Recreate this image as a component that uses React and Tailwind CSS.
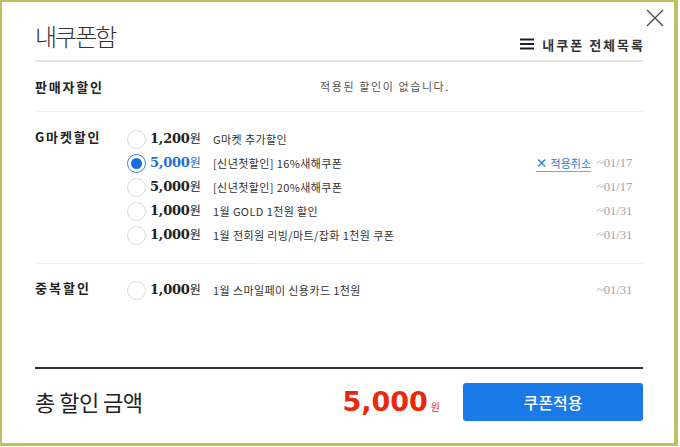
import React from "react";

const KR = { fontFamily: '"Noto Sans CJK KR", "Noto Sans", sans-serif' };

const coupons = [
  { amount: "1,200", name: "G마켓 추가할인", date: "" },
  { amount: "5,000", name: "[신년첫할인] 16%새해쿠폰", date: "~01/17", selected: true },
  { amount: "5,000", name: "[신년첫할인] 20%새해쿠폰", date: "~01/17" },
  { amount: "1,000", name: "1월 GOLD 1천원 할인", date: "~01/31" },
  { amount: "1,000", name: "1월 전회원 리빙/마트/잡화 1천원 쿠폰", date: "~01/31" },
];

const Radio = ({ checked }) => (
  <span
    className={
      "w-[19px] h-[19px] rounded-full flex items-center justify-center flex-shrink-0 bg-white " +
      (checked ? "border border-[#3b82e0]" : "border border-[#dadada]")
    }
  >
    {checked && <span className="w-[11px] h-[11px] rounded-full bg-[#1a6fe0]" />}
  </span>
);

const CouponRow = ({ amount, name, date, selected }) => (
  <div className="h-6 flex items-center">
    <Radio checked={selected} />
    <span
      className={
        "ml-[4px] w-[63px] font-bold text-[13px] tracking-[-0.2px] " +
        (selected ? "text-[#1f6fd3]" : "text-[#222]")
      }
      style={{ fontFamily: '"DejaVu Serif", serif' }}
    >
      {amount}
      <span className="text-[12px] font-normal" style={KR}>원</span>
    </span>
    <span className="text-[11px] text-[#333] flex-1 tracking-[0.4px]" style={KR}>{name}</span>
    {selected && (
      <span
        className="text-[11px] text-[#2d7ad6] border-b border-[#6aa3e6] leading-[16px] mr-[6px] flex items-center gap-[3px]"
        style={KR}
      >
        <span className="font-bold text-[12px]">×</span>적용취소
      </span>
    )}
    <span
      className="w-[36px] text-[12.5px] text-[#a3a3a3] mr-[10px]"
      style={{ fontFamily: '"Liberation Serif", serif' }}
    >
      {date}
    </span>
  </div>
);

export default function App() {
  return (
    <div className="w-[680px] h-[447px] bg-white">
      <div
        className="relative w-[678px] h-[446px] border-l-2 border-t-2 border-r-[4px] border-b-[3px] border-[#bfbf63] bg-white pl-[33px] pr-[31px] flex flex-col"
        style={KR}
      >
        <button className="absolute right-[9px] top-[6px] w-[20px] h-[20px]">
          <svg viewBox="0 0 20 20" className="w-[20px] h-[20px]">
            <path d="M2 2 L18 18 M18 2 L2 18" stroke="#444" strokeWidth="1.2" fill="none" />
          </svg>
        </button>

        <div className="h-[60px] flex items-end justify-between border-b-2 border-[#e2e2e2] pb-[6px]">
          <h1 className="text-[24px] font-light text-[#333] leading-none mb-[6px] tracking-[-2px]">
            내쿠폰함
          </h1>
          <div className="flex items-center gap-[8px] text-[13px] font-bold text-[#333]">
            <svg viewBox="0 0 14 12" className="w-[14px] h-[12px]">
              <path d="M0 1.5 H14 M0 6 H14 M0 10.5 H14" stroke="#222" strokeWidth="2" />
            </svg>
            <span className="tracking-[2px] mr-[-2px]">내쿠폰 전체목록</span>
          </div>
        </div>

        <div className="h-[50px] flex items-center border-b border-[#eeeeee]">
          <span className="w-[92px] text-[13px] font-bold text-[#222] tracking-[1.8px]">판매자할인</span>
          <span className="flex-1 text-center text-[11px] text-[#555] tracking-[1.6px]">
            적용된 할인이 없습니다.
          </span>
        </div>

        <div className="flex pt-[15px] pb-[16px] border-b border-[#eeeeee]">
          <span className="w-[92px] text-[13px] font-bold text-[#222] leading-[20px] tracking-[1.8px]">
            G마켓할인
          </span>
          <div className="flex-1 flex flex-col">
            {coupons.map((c, i) => (
              <CouponRow key={i} {...c} />
            ))}
          </div>
        </div>

        <div className="flex pt-[14px] h-[105px] border-b-2 border-[#333]">
          <span className="w-[92px] text-[13px] font-bold text-[#222] leading-[20px] tracking-[2px]">
            중복할인
          </span>
          <div className="flex-1 flex flex-col">
            <CouponRow amount="1,000" name="1월 스마일페이 신용카드 1천원" date="~01/31" />
          </div>
        </div>

        <div className="flex-1 flex items-center justify-between pb-[9px]">
          <span className="text-[22px] text-[#222] tracking-[-0.5px]">총 할인 금액</span>
          <div className="flex items-center">
            <span className="flex items-baseline text-[#e8290b] mr-[23px]">
              <span
                className="text-[27px] font-bold leading-none"
                style={{ fontFamily: '"DejaVu Sans", sans-serif' }}
              >
                5,000
              </span>
              <span className="text-[10px] ml-[3px]">원</span>
            </span>
            <button className="w-[180px] h-[38px] rounded-[3px] bg-[#1a7ae8] text-white text-[16px] font-medium">
              쿠폰적용
            </button>
          </div>
        </div>
      </div>
    </div>
  );
}
